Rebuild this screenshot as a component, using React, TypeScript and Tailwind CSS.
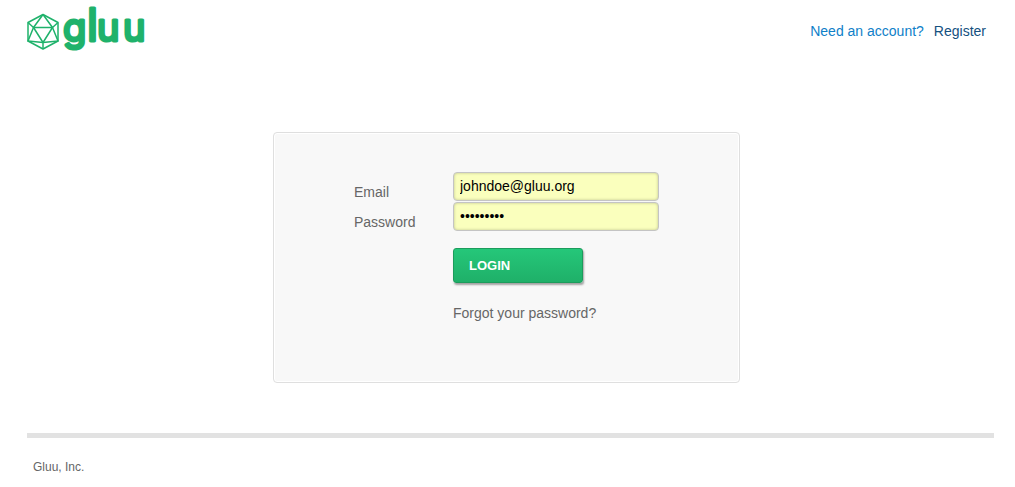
import React from "react";

function Logo() {
  return (
    <a href="#" aria-label="Gluu home" className="block">
      <svg width="124" height="56" viewBox="0 0 124 56" role="img" aria-label="gluu" className="overflow-visible">
        <g fill="none" stroke="#1fb26b" strokeWidth="1.5" strokeLinejoin="round">
          <path d="M16 14.5 31 22.500V41L16 49 1 41V22.500Z" />
          <path d="M6.500 27.500H25.500L16 42.500Z" />
          <path d="M16 14.500 6.500 27.500 1 22.500M16 14.500 25.500 27.500 31 22.500M6.500 27.500 1 41 16 42.500 31 41 25.500 27.500M16 42.500V49" />
        </g>
        <text
          y="41"
          fill="#1fb26b"
          stroke="#1fb26b"
          strokeWidth="3"
          strokeLinejoin="round"
          className="font-['Inter',sans-serif] text-[38px] leading-none font-normal"
        >
          <tspan x="36">g</tspan>
          <tspan x="60" className="text-[45px]">l</tspan>
          <tspan x="70">u</tspan>
          <tspan x="96">u</tspan>
        </text>
      </svg>
    </a>
  );
}

const fieldClass =
  "block h-[29px] w-full rounded border border-[#c4c4c4] bg-[#faffbd] px-[6px] pb-px text-sm text-black shadow-[inset_0_0_3px_rgba(0,0,0,0.25)] outline-none";

export default function App() {
  return (
    <div className="bg-white pr-[21px] pl-[27px] font-['Liberation_Sans',Arial,sans-serif] text-sm text-[#666]">
      <header className="flex items-start justify-between pr-2">
        <Logo />
        <nav className="flex gap-[10px] pt-[21px] leading-5">
          <span className="text-[#0f80c8]">Need an account?</span>
          <a href="#register" className="text-[#14507f]">
            Register
          </a>
        </nav>
      </header>

      <main className="flex justify-center pt-[76px] pr-2">
        <form
          onSubmit={(e) => e.preventDefault()}
          className="w-full max-w-[467px] rounded border border-[#dfdfdf] bg-[#f8f8f8] pt-[39px] pr-20 pb-[59px] pl-20 shadow-[inset_0_0_0_1px_#fff]"
        >
          <div className="grid grid-cols-[99px_1fr] gap-y-px">
            <label htmlFor="email" className="pt-[11px] leading-[18px]">
              Email
            </label>
            <input id="email" type="email" defaultValue="johndoe@gluu.org" className={fieldClass} />
            <label htmlFor="password" className="pt-[11px] leading-[18px]">
              Password
            </label>
            <input id="password" type="password" defaultValue="password1" className={fieldClass} />
            <div className="col-start-2 pt-4">
              <button
                type="submit"
                className="block h-[35px] w-[130px] rounded-[3px] border border-[#1c9c5c] bg-linear-to-b from-[#25c779] to-[#1fb069] px-[15px] text-left text-[13px] leading-5 font-bold text-white shadow-[1px_2px_2px_rgba(0,0,0,0.35)]"
              >
                LOGIN
              </button>
              <a href="#forgot" className="mt-5 block leading-5">
                Forgot your password?
              </a>
            </div>
          </div>
        </form>
      </main>

      <footer className="mt-[50px] border-t-[5px] border-[#e2e2e2] px-[6px] pt-[19px] text-xs leading-5">
        Gluu, Inc.
      </footer>
    </div>
  );
}
